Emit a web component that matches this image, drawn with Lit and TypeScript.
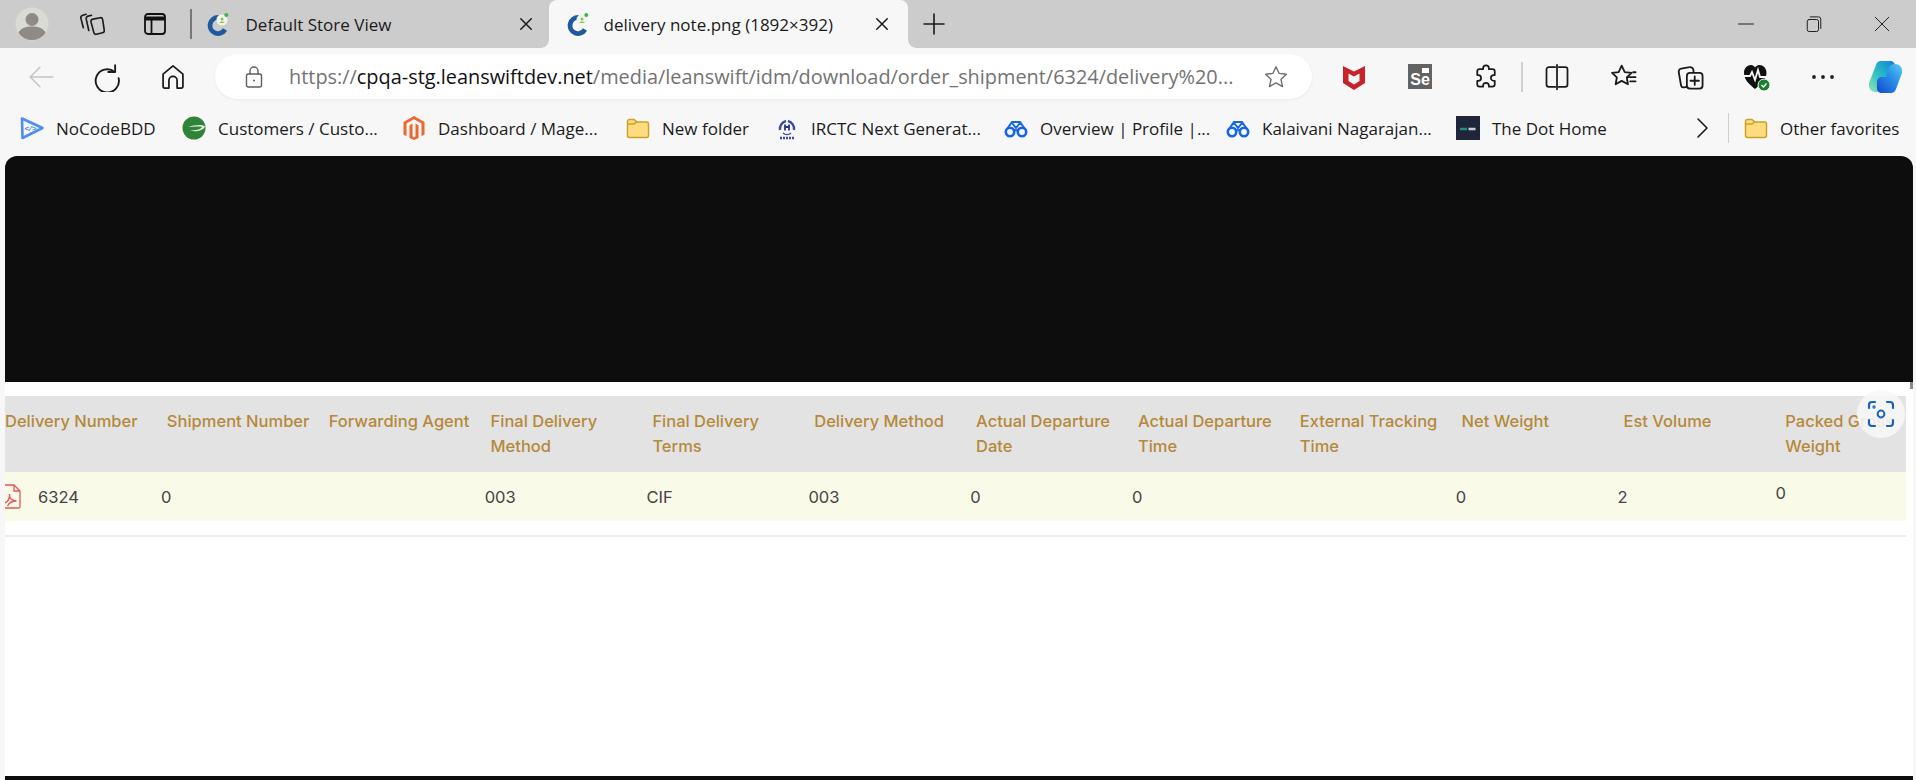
import { LitElement, html, svg, css } from "lit";
import { customElement } from "lit/decorators.js";

const S = (size: number, body: unknown, cls = "") => html`<svg class="ic ${cls}" width=${size} height=${size} viewBox="0 0 24 24" fill="none" stroke="currentColor" stroke-width="1.5" stroke-linecap="round" stroke-linejoin="round">${body}</svg>`;

const favicon = html`<svg width="24" height="24" viewBox="0 0 24 24" fill="none">
  <path d="M12.500 5.500A8 8 0 1 0 19 17.500" stroke="#1f5b9c" stroke-width="4.800"/>
  <circle cx="16" cy="8" r="5.600" fill="#f1f4ee"/>
  <circle cx="16" cy="7" r="1.500" fill="#8ec04a"/><path d="M13.500 11c.3-2 4.700-2 5 0z" fill="#8ec04a"/>
  <circle cx="20.300" cy="3" r="2" fill="#3fb24a"/>
</svg>`;

const folder = html`<svg width="24" height="24" viewBox="0 0 24 24">
  <path d="M1.500 5.500a2 2 0 0 1 2-2h4.500l3 2.500h9.500a2 2 0 0 1 2 2v11.500a2 2 0 0 1-2 2h-17a2 2 0 0 1-2-2z" fill="#ffdc80" stroke="#c9a227" stroke-width="1.500"/>
  <path d="M1.500 8h6.500l3-2.500" fill="none" stroke="#c9a227" stroke-width="1.500"/>
</svg>`;

const glasses = html`<svg width="24" height="24" viewBox="0 0 24 24" fill="none" stroke="#1766e6" stroke-width="2.600">
  <circle cx="6" cy="16" r="4.200"/><circle cx="18" cy="16" r="4.200"/>
  <path d="M10 15c1-1.200 3-1.200 4 0M3 13l5-7h8l5 7M8 7l4 5 4-5" stroke-width="2"/>
</svg>`;

const bookmarks: { w: number; icon: unknown; text: string }[] = [
  { w: 162, text: "NoCodeBDD", icon: html`<svg width="24" height="24" viewBox="0 0 24 24" fill="none"><path d="M2 2.500 22.500 12 2.500 22z" stroke="#4d8ff0" stroke-width="2.600" stroke-linejoin="round"/><text x="4.500" y="15" font-size="8" font-weight="700" font-family="Liberation Mono" fill="#4d8ff0" textLength="12">&lt;/&gt;</text></svg>` },
  { w: 220, text: "Customers / Custo...", icon: html`<svg width="24" height="24" viewBox="0 0 24 24"><circle cx="12" cy="12" r="11.500" fill="#2f8438"/><path d="M6 11c6-2 14-3 17-.500-1 4-10 6-15 4 5 0 11-1 12-3.500-3-1-9-.500-14 0z" fill="#dfeee0"/></svg>` },
  { w: 224, text: "Dashboard / Mage...", icon: html`<svg width="24" height="24" viewBox="0 0 24 24"><path d="M12 0 22.500 6v12.500l-3 1.800V7.500L12 3.200 4.500 7.500v12.800l-3-1.800V6z" fill="#ee672f"/><path d="M10.500 7.500v13l1.500 1 1.500-1v-13l3 1.700v12.800L12 24l-4.500-2V9.200z" fill="#ee672f"/></svg>` },
  { w: 149, text: "New folder", icon: folder },
  { w: 229, text: "IRCTC Next Generat...", icon: html`<svg width="24" height="24" viewBox="0 0 24 24" fill="none"><path d="M5 14a8 8 0 0 1 6-9M19 14a8 8 0 0 0-6-9" stroke="#3b4aa8" stroke-width="2.400"/><path d="M8 17a6 6 0 0 0 8 0" stroke="#3b4aa8" stroke-width="1.500"/><path d="M10 8.500v6M14 8.500v6M10 11h4" stroke="#27337f" stroke-width="1.800"/><path d="M5 22h14" stroke="#3b4aa8" stroke-width="2.400" stroke-dasharray="2 1"/></svg>` },
  { w: 222, text: "Overview | Profile |...", icon: glasses },
  { w: 230, text: "Kalaivani Nagarajan...", icon: glasses },
  { w: 216, text: "The Dot Home", icon: html`<svg width="24" height="24" viewBox="0 0 24 24"><rect width="24" height="24" fill="#20263a"/><path d="M4 13h7" stroke="#1f8f7f" stroke-width="2.500"/><path d="M12.500 13h7" stroke="#c9cdd6" stroke-width="2.500"/></svg>` },
];

const heads = ["Delivery Number", "Shipment Number", "Forwarding Agent", "Final Delivery Method", "Final Delivery Terms", "Delivery Method", "Actual Departure Date", "Actual Departure Time", "External Tracking Time", "Net Weight", "Est Volume", "Packed Gross Weight"];
const cells = ["0", "", "003", "CIF", "003", "0", "0", "", "0", "2"];

@customElement("app-root")
export class AppRoot extends LitElement {
  static styles = css`
    :host { display: block; width: 1916px; height: 780px; overflow: hidden; font-family: "Open Sans", sans-serif; color: #1b1b1b; background: #f7f7f7; }
    .ic { display: block; }
    .slot { display: flex; align-items: center; justify-content: center; flex: none; }
    .strip { height: 48px; background: #ccc; display: flex; align-items: center; }
    .s-avatar { width: 64px; }
    .s-coll { width: 56px; }
    .s-vert { width: 70px; }
    .strip-div { width: 1.500px; height: 30px; background: #777; flex: none; }
    .tab { height: 48px; display: flex; align-items: center; flex: none; position: relative; box-sizing: border-box; }
    .tab .title { font-size: 17px; white-space: nowrap; flex: 1; }
    .tab .fav { width: 24px; height: 24px; flex: none; }
    .tab.off { width: 357px; padding: 0 14px 0 14px; }
    .tab.off .fav { margin-right: 16px; }
    .tab.on { width: 359px; padding: 0 17px 0 17px; background: #f7f7f7; border-radius: 8px 8px 0 0; }
    .tab.on .fav { margin-right: 14px; }
    .tab.on::before, .tab.on::after { content: ""; position: absolute; bottom: 0; width: 8px; height: 8px; }
    .tab.on::before { left: -8px; background: radial-gradient(circle at 0 0, transparent 7.500px, #f7f7f7 8px); }
    .tab.on::after { right: -8px; background: radial-gradient(circle at 100% 0, transparent 7.500px, #f7f7f7 8px); }
    .s-plus { width: 52px; }
    .grow { flex: 1; }
    .s-win { width: 68px; }
    .toolbar { height: 57px; box-sizing: border-box; padding: 6px 0 6px 8px; display: flex; align-items: center; }
    .s-tool { width: 66px; height: 45px; }
    .s-tool.back { color: #c4c4c4; }
    .addr { width: 1097px; height: 45px; margin: 0 9px; flex: none; box-sizing: border-box; background: #fff; border-radius: 23px; box-shadow: 0 1px 3px rgba(0,0,0,.06); display: flex; align-items: center; padding-left: 27px; }
    .lock { color: #5f5f5f; margin-right: 23px; flex: none; }
    .url { font-size: 19.900px; white-space: nowrap; color: #737373; width: 948px; overflow: hidden; flex: none; }
    .url b { font-weight: 400; color: #111; }
    .star { color: #6e6e6e; margin-left: 26px; flex: none; }
    .s-tooldiv { width: 5px; display: flex; justify-content: center; flex: none; }
    .tooldiv { width: 2px; height: 30px; background: #d0d0d0; }
    .s-tool.w { width: 66.500px; }
    .s-tool.w.cop { width: 58px; }
    .se { width: 24px; height: 25px; background: #636363; color: #fff; font: 700 16px/1 "Liberation Sans", sans-serif; display: flex; align-items: flex-end; justify-content: center; padding-bottom: 1px; box-sizing: border-box; position: relative; }
    .se i { position: absolute; top: 4px; right: 3px; width: 7px; height: 5px; background: #fff; }
    .bm { height: 51px; box-sizing: border-box; padding: 0 0 5px 20px; display: flex; align-items: center; }
    .bm-item { display: flex; align-items: center; flex: none; font-size: 17px; white-space: nowrap; }
    .bm-icon { width: 24px; height: 24px; flex: none; margin-right: 12px; }
    .s-chev { width: 30px; margin-left: 15px; }
    .bmdiv { width: 1px; height: 30px; background: #cfcfcf; margin: 0 15px 0 11px; flex: none; }
    .bm-other { display: flex; align-items: center; flex: none; font-size: 17px; white-space: nowrap; gap: 12px; }
    .page { height: 624px; padding: 0 3px 0 5px; display: flex; flex-direction: column; position: relative; }
    .black { height: 226px; flex: none; background: #0d0d0d; border-radius: 12px 12px 0 0; }
    .content { flex: 1; background: #fff; padding: 14px 7px 0 0; min-height: 0; overflow: hidden; font-family: Inter, sans-serif; }
    .foot { height: 4px; flex: none; background: #0d0d0d; }
    .thead { display: grid; grid-template-columns: repeat(12, 161.850px); height: 76px; background: #e3e3e3; overflow: hidden; color: #b5893a; font-size: 16.500px; font-weight: 500; line-height: 25px; }
    .th { padding: 13px 16px 0 0; }
    .tbody { display: grid; grid-template-columns: 156px repeat(10, 161.850px) 100px; height: 49px; background: #fafae9; align-items: center; color: #444; font-size: 16.500px; overflow: hidden; }
    .first { display: flex; align-items: center; gap: 17px; }
    .pdf { color: #e2575a; flex: none; }
    .last { padding-bottom: 8px; margin-left: -4px; }
    .rule { height: 2px; margin-top: 14px; background: #ececec; }
    .lens { position: absolute; left: 1857px; top: 234px; width: 48px; height: 48px; border-radius: 50%; background: rgba(247,247,247,.88); display: flex; align-items: center; justify-content: center; color: #1565c0; }
    .thumb { position: absolute; left: 1910px; top: 226px; width: 3px; height: 7px; background: #8a8a8a; }
  `;

  render() {
    return html`
      <div class="strip">
        <div class="slot s-avatar"><svg width="34" height="34" viewBox="0 0 34 34"><circle cx="17" cy="17" r="16.500" fill="#dbdbd5"/><circle cx="17" cy="12.500" r="6.500" fill="#8e8b86"/><path d="M3.500 26c2-5 7-6.500 13.500-6.500S28.500 21 30.500 26A16.500 16.500 0 0 1 3.500 26z" fill="#8e8b86"/></svg></div>
        <div class="slot s-coll">${S(26, svg`<path d="M13 7.500l6.500-1.300a2 2 0 0 1 2.300 1.600l1.500 10a2 2 0 0 1-1.600 2.300L16 21.500a2 2 0 0 1-2.300-1.600L11 9.800A2 2 0 0 1 13 7.500z"/><path d="M11.500 4 8.500 4.700A2.500 2.500 0 0 0 6.700 7.500L9 18"/><path d="M6.500 3 3.500 4A2.500 2.500 0 0 0 1.800 7L4 15.500"/>`)}</div>
        <div class="slot s-vert"><svg width="22" height="22" viewBox="0 0 22 22" fill="none" stroke="#111" stroke-width="1.800"><rect x="1" y="1" width="20" height="20" rx="3"/><path d="M1 5.500h20" stroke-width="4"/><path d="M7.500 6v15"/></svg></div>
        <div class="strip-div"></div>
        <div class="tab off">
          <div class="fav">${favicon}</div>
          <div class="title">Default Store View</div>
          ${S(18, svg`<path d="M5 5l14 14M19 5L5 19" stroke-width="2"/>`)}
        </div>
        <div class="tab on">
          <div class="fav">${favicon}</div>
          <div class="title">delivery note.png (1892×392)</div>
          ${S(18, svg`<path d="M5 5l14 14M19 5L5 19" stroke-width="2"/>`)}
        </div>
        <div class="slot s-plus">${S(24, svg`<path d="M12 2v20M2 12h20" stroke-width="1.600"/>`)}</div>
        <div class="grow"></div>
        <div class="slot s-win">${S(18, svg`<path d="M2 12h20" stroke-width="1.300"/>`)}</div>
        <div class="slot s-win">${S(18, svg`<rect x="3" y="6" width="15" height="16" rx="2.500" stroke-width="1.300"/><path d="M7 2.500h11a3 3 0 0 1 3 3V18" stroke-width="1.300"/>`)}</div>
        <div class="slot s-win">${S(18, svg`<path d="M3 3l18 18M21 3L3 21" stroke-width="1.300"/>`)}</div>
      </div>

      <div class="toolbar">
        <div class="slot s-tool back">${S(26, svg`<path d="M23 12H2M11 3l-9 9 9 9" stroke-width="1.400"/>`)}</div>
        <div class="slot s-tool">${S(30, svg`<path d="M18.500 2.500v5.500h-5.500" /><path d="M18 7.800A9.300 9.300 0 1 0 21.300 13"/>`)}</div>
        <div class="slot s-tool">${S(28, svg`<path d="M12 2.500 20.500 9.500V20a1.500 1.500 0 0 1-1.500 1.500h-3.500V15a3 3 0 0 0-7 0v6.500H5A1.500 1.500 0 0 1 3.500 20V9.500z"/>`)}</div>
        <div class="addr">
          ${S(24, svg`<rect x="4.500" y="9" width="15" height="13" rx="2" stroke-width="1.400"/><path d="M8 9V6a4 4 0 0 1 8 0v3" stroke-width="1.400"/><circle cx="12" cy="15.500" r="1" fill="currentColor" stroke="none"/>`, "lock")}
          <div class="url">https://<b>cpqa-stg.leanswiftdev.net</b>/media/leanswift/idm/download/order_shipment/6324/delivery%20...</div>
          ${S(26, svg`<path d="M12 2.500l2.900 6.200 6.700.8-5 4.600 1.400 6.700-6-3.400-6 3.400 1.400-6.700-5-4.600 6.700-.8z" stroke-width="1.300"/>`, "star")}
        </div>
        <div class="slot s-tool"><svg width="24" height="28" viewBox="0 0 24 28"><path d="M1 3 12 8.500 23 3v17l-11 7-11-7z" fill="#c8222a"/><path d="M6.500 10.500 12 13.500l5.500-3v7.500L12 21.500 6.500 18z" fill="#f7f7f7"/></svg></div>
        <div class="slot s-tool"><div class="se">Se<i></i></div></div>
        <div class="slot s-tool">${S(28, svg`<path d="M9.500 4.500a2.500 2.500 0 0 1 5 0v.8h3a2 2 0 0 1 2 2v3h-.8a2.500 2.500 0 0 0 0 5h.8v3a2 2 0 0 1-2 2h-3v-.8a2.500 2.500 0 0 0-5 0v.8h-3a2 2 0 0 1-2-2v-3h.8a2.500 2.500 0 0 0 0-5h-.8v-3a2 2 0 0 1 2-2h3z" stroke-width="1.500"/>`)}</div>
        <div class="s-tooldiv"><div class="tooldiv"></div></div>
        <div class="slot s-tool w">${S(28, svg`<path d="M10.500 3.500H5A2 2 0 0 0 3 5.500v13a2 2 0 0 0 2 2h5.500M13.500 3.500H19a2 2 0 0 1 2 2v13a2 2 0 0 1-2 2h-5.500M12 1.500v21"/>`)}</div>
        <div class="slot s-tool w">${S(29, svg`<path d="M10.500 3 13 8.300l5.700.7-4 3.800 1 5.600-5.200-2.800-5 2.800 1-5.600L2.500 9l5.500-.7z"/><path d="M15.500 12.500h6.500M17.500 16h4.500M20 8.500h2" />`)}</div>
        <div class="slot s-tool w">${S(29, svg`<path d="M9 20.500 6.500 21A2 2 0 0 1 4.200 19.500L2.300 8.500A2.500 2.500 0 0 1 4.300 5.500l7-1.200a2.500 2.500 0 0 1 3 2l.3 2"/><rect x="9" y="9" width="13" height="13" rx="2.500"/><path d="M15.500 12v7M12 15.500h7"/>`)}</div>
        <div class="slot s-tool w"><svg width="30" height="30" viewBox="0 0 30 30"><path d="M13 27C7 22 2 18 2 10.500 2 6 5.500 3 9 3c2 0 3.200 1 4 2.500C14 4 15.500 3 17.500 3 21 3 24.500 6 24.500 10.500 24.500 18 19 22 13 27z" fill="#111"/><path d="M1 14h7l2-4 3 8 3-10 2 7h8" fill="none" stroke="#f7f7f7" stroke-width="1.800"/><circle cx="22" cy="23" r="6" fill="#16802a" stroke="#f7f7f7"/><path d="M19.500 23l2 2 3-3.500" fill="none" stroke="#fff" stroke-width="1.400"/></svg></div>
        <div class="slot s-tool w"><svg width="24" height="24" viewBox="0 0 24 24" fill="#222"><circle cx="3" cy="12" r="1.900"/><circle cx="12" cy="12" r="1.900"/><circle cx="21" cy="12" r="1.900"/></svg></div>
        <div class="slot s-tool w cop"><svg width="36" height="34" viewBox="0 0 36 34"><defs>
            <linearGradient id="c1" x1="0" y1="1" x2="1" y2="0"><stop offset="0" stop-color="#8fe8a8"/><stop offset=".45" stop-color="#2fc0c4"/><stop offset="1" stop-color="#0e7fd8"/></linearGradient>
            <linearGradient id="c2" x1="0" y1="1" x2="1" y2="0"><stop offset="0" stop-color="#1248d0"/><stop offset=".55" stop-color="#2a8ee8"/><stop offset="1" stop-color="#58cdf0"/></linearGradient></defs>
          <path d="M13 1h9c3 0 5 2 5 5v6c0 3-2 5-5 5h-4l-3 9c-1 4-3 6-7 6-5 0-8-4-7-9L8 5c.7-2.500 2.500-4 5-4z" fill="url(#c1)"/>
          <path d="M23 33h-9c-3 0-5-2-5-5v-6c0-3 2-5 5-5h4l3-9c1-3 3-4 6-4 5 0 8 4 7 9l-6 16c-.7 2.500-2.500 4-5 4z" fill="url(#c2)"/>
        </svg></div>
      </div>

      <div class="bm">
        ${bookmarks.map((b) => html`<div class="bm-item" style="width:${b.w}px"><div class="bm-icon">${b.icon}</div><span>${b.text}</span></div>`)}
        <div class="slot s-chev">${S(24, svg`<path d="M8 3l9 9-9 9" stroke-width="1.600"/>`)}</div>
        <div class="bmdiv"></div>
        <div class="bm-other">${folder}<span>Other favorites</span></div>
      </div>

      <div class="page">
        <div class="black"></div>
        <div class="content">
          <div class="thead">${heads.map((h) => html`<div class="th">${h}</div>`)}</div>
          <div class="tbody">
            <div class="first">
              <svg class="pdf" width="16" height="25" viewBox="0 0 16 25" fill="none" stroke="currentColor" stroke-width="1.300"><path d="M0 1h9l6 6v15.500a1.500 1.500 0 0 1-1.500 1.500H0M9 1v6h6"/><path d="M0 19c3-1 5-5 4.500-9-.5 4 2.500 7 7 7-4 0-7 1-9 5" stroke-width="1.400"/></svg>
              <span>6324</span>
            </div>
            ${cells.map((c) => html`<div>${c}</div>`)}
            <div class="last">0</div>
          </div>
          <div class="rule"></div>
        </div>
        <div class="foot"></div>
        <div class="lens"><svg width="28" height="28" viewBox="0 0 28 28" fill="none" stroke="currentColor" stroke-width="2.200" stroke-linecap="round"><path d="M2 8V5a3 3 0 0 1 3-3h3M20 2h3a3 3 0 0 1 3 3v3M26 20v3a3 3 0 0 1-3 3h-3M8 26H5a3 3 0 0 1-3-3v-3"/><circle cx="14" cy="14" r="3.400" stroke-width="2"/><circle cx="7" cy="7" r=".6" fill="currentColor"/></svg></div>
        <div class="thumb"></div>
      </div>
    `;
  }
}
